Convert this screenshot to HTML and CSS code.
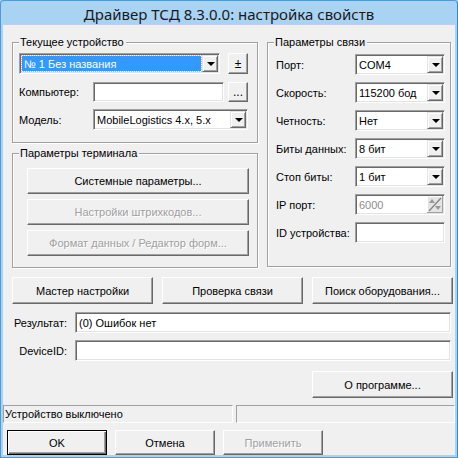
FILE: index.html
```html
<!DOCTYPE html>
<html lang="ru">
<head>
    <meta charset="UTF-8">
    <title>Драйвер ТСД 8.3.0.0: настройка свойств</title>
    <link rel="stylesheet" href="styles.css">
</head>
<body>
    <div class="window">
        <div class="titlebar">Драйвер ТСД 8.3.0.0: настройка свойств</div>

        <div class="client">
            <div class="top">
                <div class="left-col">
                    <!-- Current device -->
                    <div class="group group-device">
                        <span class="group-title">Текущее устройство</span>
                        <div class="row">
                            <div class="combo combo-device focused">
                                <span class="combo-text">№ 1 Без названия</span>
                                <span class="combo-btn"></span>
                            </div>
                            <button class="btn btn-small">±</button>
                        </div>
                        <div class="row row-computer">
                            <label class="lbl">Компьютер:</label>
                            <div class="edit edit-computer"></div>
                            <button class="btn btn-small btn-dots">...</button>
                        </div>
                        <div class="row row-model">
                            <label class="lbl">Модель:</label>
                            <div class="combo combo-model">
                                <span class="combo-text">MobileLogistics 4.x, 5.x</span>
                                <span class="combo-btn"></span>
                            </div>
                        </div>
                    </div>

                    <!-- Terminal params -->
                    <div class="group group-terminal">
                        <span class="group-title">Параметры терминала</span>
                        <button class="btn btn-wide">Системные параметры...</button>
                        <button class="btn btn-wide" disabled>Настройки штрихкодов...</button>
                        <button class="btn btn-wide" disabled>Формат данных / Редактор форм...</button>
                    </div>
                </div>

                <!-- Connection params -->
                <div class="group group-link">
                    <span class="group-title">Параметры связи</span>
                    <div class="link-row">
                        <label class="lbl">Порт:</label>
                        <div class="combo combo-link"><span class="combo-text">COM4</span><span class="combo-btn"></span></div>
                    </div>
                    <div class="link-row">
                        <label class="lbl">Скорость:</label>
                        <div class="combo combo-link"><span class="combo-text">115200 бод</span><span class="combo-btn"></span></div>
                    </div>
                    <div class="link-row">
                        <label class="lbl">Четность:</label>
                        <div class="combo combo-link"><span class="combo-text">Нет</span><span class="combo-btn"></span></div>
                    </div>
                    <div class="link-row">
                        <label class="lbl">Биты данных:</label>
                        <div class="combo combo-link"><span class="combo-text">8 бит</span><span class="combo-btn"></span></div>
                    </div>
                    <div class="link-row">
                        <label class="lbl">Стоп биты:</label>
                        <div class="combo combo-link"><span class="combo-text">1 бит</span><span class="combo-btn"></span></div>
                    </div>
                    <div class="link-row">
                        <label class="lbl">IP порт:</label>
                        <div class="edit edit-link disabled">
                            <span class="edit-text">6000</span>
                            <svg class="spin" width="16" height="17" viewBox="0 0 16 17">
                                <rect x="0" y="0" width="16" height="17" fill="#e4e4e4"/>
                                <path d="M0.5 17 V0.5 H16" stroke="#ffffff" fill="none"/>
                                <path d="M15.5 0 V16.5 H0" stroke="#a0a0a0" fill="none"/>
                                <path d="M2 15 L14 2" stroke="#808080" stroke-width="1.2"/>
                                <path d="M2 7 L5 3 L8 7 Z" fill="#999"/>
                                <path d="M8 10 L11 14 L14 10 Z" fill="#999"/>
                            </svg>
                        </div>
                    </div>
                    <div class="link-row">
                        <label class="lbl">ID устройства:</label>
                        <div class="edit edit-link"></div>
                    </div>
                </div>
            </div>

            <div class="actions">
                <button class="btn btn-action">Мастер настройки</button>
                <button class="btn btn-action">Проверка связи</button>
                <button class="btn btn-action">Поиск оборудования...</button>
            </div>

            <div class="field-row">
                <label class="lbl field-lbl">Результат:</label>
                <div class="edit edit-long"><span class="edit-text">(0) Ошибок нет</span></div>
            </div>
            <div class="field-row field-row-id">
                <label class="lbl field-lbl">DeviceID:</label>
                <div class="edit edit-long"></div>
            </div>

            <div class="about-row">
                <button class="btn btn-action">О программе...</button>
            </div>

            <div class="statusbar">
                <div class="panel panel-main">Устройство выключено</div>
                <div class="panel panel-rest"></div>
            </div>

            <div class="dialog-buttons">
                <button class="btn btn-dialog default">OK</button>
                <button class="btn btn-dialog">Отмена</button>
                <button class="btn btn-dialog" disabled>Применить</button>
            </div>
        </div>
    </div>
</body>
</html>
```

FILE: styles.css
```css
* {
    margin: 0;
    padding: 0;
    box-sizing: border-box;
}

body {
    width: 458px;
    height: 458px;
    overflow: hidden;
    font-family: 'Liberation Sans', Arial, sans-serif;
    font-size: 11px;
    color: #000;
    background: #a9d3f3;
}

.window {
    width: 458px;
    height: 458px;
    background: #a9d3f3;
    border: 1px solid #4f9ad6;
    border-right-color: #1c8fdc;
    border-radius: 4px 4px 0 0;
    padding: 0 2px 3px 2px;
    display: flex;
    flex-direction: column;
}

.titlebar {
    height: 24px;
    line-height: 27px;
    text-align: center;
    font-family: 'Noto Sans', 'Open Sans', sans-serif;
    font-size: 15px;
    color: #1a1a1a;
    border-bottom: 1px dotted #d8c4ea;
}

.client {
    flex: 1;
    background: #f0f0f0;
    padding: 17px 0 0 9px;
    display: flex;
    flex-direction: column;
}

/* Group boxes */
.top {
    display: flex;
    gap: 9px;
}

.left-col {
    width: 246px;
    display: flex;
    flex-direction: column;
    gap: 10px;
}

.group {
    position: relative;
    border: 1px solid #a0a0a0;
    box-shadow: inset 1px 1px 0 #fff, 1px 1px 0 #fff;
}

.group-title {
    position: absolute;
    top: -8px;
    left: 6px;
    padding: 0 2px 0 1px;
    background: #f0f0f0;
    line-height: 14px;
}

.group-device {
    height: 101px;
    padding: 10px 6px 0 6px;
}

.group-terminal {
    height: 115px;
    padding: 14px 0 0 14px;
    display: flex;
    flex-direction: column;
    gap: 5px;
}

.group-link {
    width: 184px;
    height: 225px;
    padding: 11px 0 0 8px;
    display: flex;
    flex-direction: column;
    gap: 7px;
}

.row {
    display: flex;
    align-items: center;
}

.row-computer {
    margin-top: 8px;
}

.row-model {
    margin-top: 7px;
}

.lbl {
    width: 74px;
    flex-shrink: 0;
    white-space: nowrap;
}

.link-row {
    display: flex;
    align-items: center;
    height: 21px;
}

.link-row .lbl {
    width: 79px;
}

/* Sunken edits and combos */
.edit,
.combo {
    height: 21px;
    background: #fff;
    border: 1px solid;
    border-color: #a0a0a0 #fff #fff #a0a0a0;
    box-shadow: inset 1px 1px 0 #696969, inset -1px -1px 0 #e3e3e3;
    display: flex;
    align-items: center;
}

.combo-text,
.edit-text {
    flex: 1;
    padding-left: 3px;
    white-space: nowrap;
    overflow: hidden;
}

.combo-btn {
    width: 16px;
    height: 17px;
    margin-right: 1px;
    background: #f0f0f0;
    border: 1px solid;
    border-color: #e3e3e3 #696969 #696969 #e3e3e3;
    box-shadow: inset 1px 1px 0 #fff, inset -1px -1px 0 #a0a0a0;
    position: relative;
}

.combo-btn::after {
    content: '';
    position: absolute;
    left: 4px;
    top: 6px;
    border-left: 4px solid transparent;
    border-right: 4px solid transparent;
    border-top: 4px solid #000;
}

.combo-device {
    width: 201px;
}

.combo-device .combo-text {
    align-self: stretch;
    margin: 2px 1px 2px 2px;
    padding-left: 2px;
    display: flex;
    align-items: center;
    background: #3399ff;
    color: #fff;
    outline: 1px dotted #f2c200;
}

.combo-model {
    width: 155px;
}

.edit-computer {
    width: 131px;
    height: 20px;
}

.combo-link,
.edit-link {
    width: 90px;
}

.edit-link.disabled {
    color: #8d8d8d;
}

.spin {
    margin-right: 1px;
}

/* Raised buttons */
.btn {
    font-family: inherit;
    font-size: 11px;
    font-weight: normal;
    color: #000;
    background: #f0f0f0;
    border: 1px solid;
    border-color: #fff #696969 #696969 #fff;
    box-shadow: inset -1px -1px 0 #a0a0a0;
    white-space: nowrap;
}

.btn:disabled {
    color: #a0a0a0;
    text-shadow: 1px 1px 0 #fff;
}

.btn-small {
    width: 20px;
    height: 21px;
    margin-left: 8px;
    font-size: 12px;
}

.btn-dots {
    margin-left: 4px;
    height: 20px;
    line-height: 10px;
}

.btn-wide {
    width: 222px;
    height: 26px;
}

.actions {
    display: flex;
    gap: 9px;
    margin-top: 9px;
}

.btn-action {
    width: 141px;
    height: 27px;
}

.field-row {
    display: flex;
    align-items: center;
    gap: 8px;
    margin-top: 8px;
}

.field-row-id {
    margin-top: 7px;
}

.field-lbl {
    width: 55px;
    text-align: right;
}

.edit-long {
    width: 376px;
}

.about-row {
    display: flex;
    margin: 10px 0 0 300px;
}

/* Status bar */
.statusbar {
    display: flex;
    gap: 3px;
    height: 18px;
    margin: 7px 0 0 -9px;
}

.panel {
    border: 1px solid;
    border-color: #a0a0a0 #fff #fff #a0a0a0;
    padding-left: 1px;
    line-height: 16px;
    white-space: nowrap;
}

.panel-main {
    width: 230px;
}

.panel-rest {
    flex: 1;
}

.dialog-buttons {
    display: flex;
    gap: 8px;
    margin: 7px 0 0 -5px;
}

.btn-dialog {
    width: 100px;
    height: 25px;
}

.btn-dialog.default {
    border: 1px solid #000;
    box-shadow: inset 1px 1px 0 #fff, inset -1px -1px 0 #696969, inset -2px -2px 0 #a0a0a0;
}
```
